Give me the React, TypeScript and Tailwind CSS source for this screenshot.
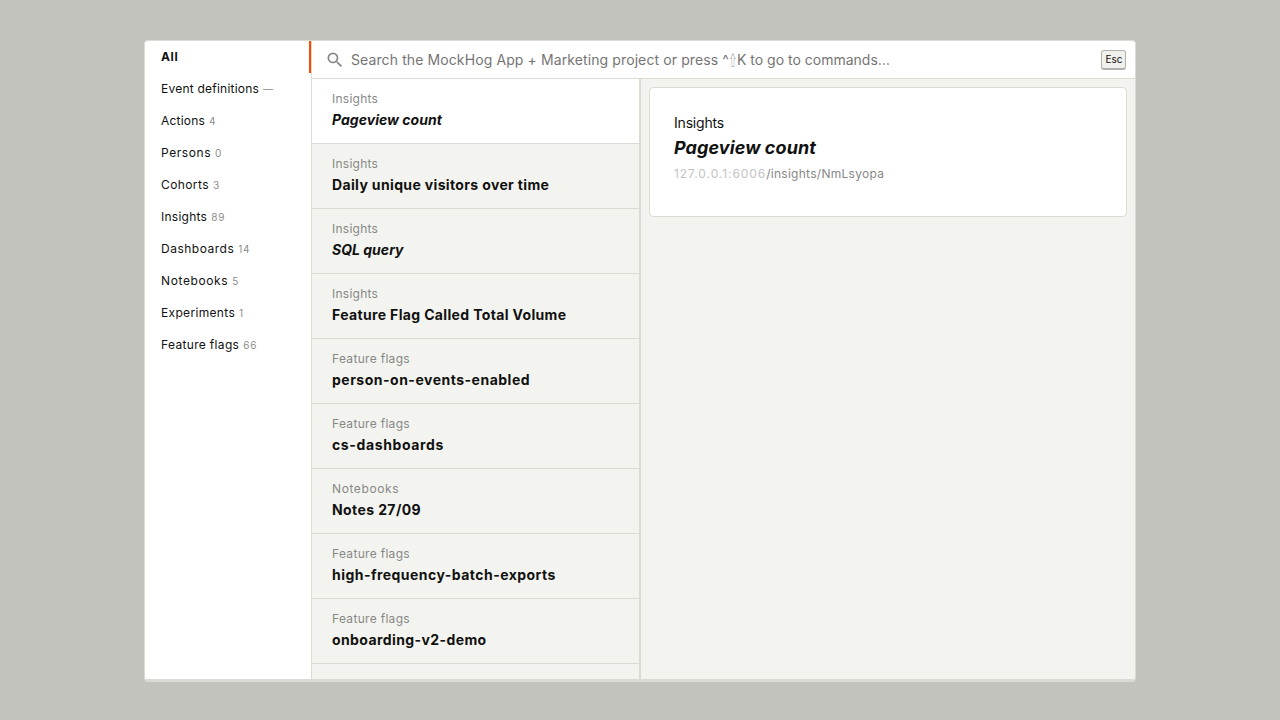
const tabs: { label: string; count: string; tracking: string }[] = [
  { label: 'All', count: '', tracking: 'tracking-[0.6px]' },
  { label: 'Event definitions', count: '—', tracking: 'tracking-[0.23px]' },
  { label: 'Actions', count: '4', tracking: 'tracking-[0.2px]' },
  { label: 'Persons', count: '0', tracking: 'tracking-[0.57px]' },
  { label: 'Cohorts', count: '3', tracking: 'tracking-[0.4px]' },
  { label: 'Insights', count: '89', tracking: 'tracking-[0.25px]' },
  { label: 'Dashboards', count: '14', tracking: 'tracking-[0.5px]' },
  { label: 'Notebooks', count: '5', tracking: 'tracking-[0.62px]' },
  { label: 'Experiments', count: '1', tracking: 'tracking-[0.33px]' },
  { label: 'Feature flags', count: '66', tracking: 'tracking-[0.33px]' },
]

const kindTracking: Record<string, string> = {
  Insights: 'tracking-[0.25px]',
  Notebooks: 'tracking-[0.6px]',
  'Feature flags': 'tracking-[0.31px]',
}

const results: { kind: string; name: string; tracking: string; italic?: boolean }[] = [
  { kind: 'Insights', name: 'Pageview count', tracking: 'tracking-[0.02px]', italic: true },
  { kind: 'Insights', name: 'Daily unique visitors over time', tracking: 'tracking-[0.355px]' },
  { kind: 'Insights', name: 'SQL query', tracking: 'tracking-[0.02px]', italic: true },
  { kind: 'Insights', name: 'Feature Flag Called Total Volume', tracking: 'tracking-[0.35px]' },
  { kind: 'Feature flags', name: 'person-on-events-enabled', tracking: 'tracking-[0.5px]' },
  { kind: 'Feature flags', name: 'cs-dashboards', tracking: 'tracking-[0.62px]' },
  { kind: 'Notebooks', name: 'Notes 27/09', tracking: 'tracking-[0.4px]' },
  { kind: 'Feature flags', name: 'high-frequency-batch-exports', tracking: 'tracking-[0.46px]' },
  { kind: 'Feature flags', name: 'onboarding-v2-demo', tracking: 'tracking-[0.4px]' },
]

function SearchIcon() {
  return (
    <svg className="size-5 shrink-0 text-[#888]" viewBox="0 0 24 24" fill="currentColor">
      <path d="M15.5 14h-.79l-.28-.27A6.471 6.471 0 0 0 16 9.5 6.5 6.5 0 1 0 9.5 16c1.61 0 3.09-.59 4.23-1.57l.27.28v.79l5 4.99L20.49 19l-4.99-5zm-6 0C7.01 14 5 11.99 5 9.5S7.01 5 9.5 5 14 7.01 14 9.5 11.99 14 9.5 14z" />
    </svg>
  )
}

export default function App() {
  return (
    <div className="flex h-[720px] w-full justify-center bg-[#c2c3bd] pt-10 font-['Inter',sans-serif] text-[#111]">
      <div className="flex h-[642px] w-[992px] overflow-hidden rounded border border-b-[3px] border-[#dadbd2] bg-[#f3f4ef]">
        <nav className="w-[167px] shrink-0 border-r border-[#dadbd2] bg-white">
          {tabs.map(({ label, count, tracking }, i) => (
            <div
              key={label}
              className={`flex h-8 items-center gap-1 pl-4 text-xs ${i === 0 ? 'border-r-2 border-[#f54e00] font-bold' : ''}`}
            >
              <span className={tracking}>{label}</span>
              <span className="pt-0.5 text-[10px] tracking-[0.8px] text-[#8c8c8c]">{count}</span>
            </div>
          ))}
        </nav>
        <div className="flex min-w-0 flex-1 flex-col">
          <header className="flex h-[38px] shrink-0 items-center border-b border-[#dadbd2] bg-white pr-[9px] pl-[13px]">
            <SearchIcon />
            <span className="ml-1.5 flex-1 text-sm whitespace-nowrap text-[#757575]">
              <span className="tracking-[0.105px]">Search the MockHog App + Marketing project or press ^</span>
              <span className="inline-block w-2 origin-left scale-x-55 font-['Noto_Sans_CJK_JP',sans-serif] leading-none">
                ⇧
              </span>
              K to go to commands…
            </span>
            <kbd className="flex h-5 w-[25px] items-center justify-center rounded-[3px] border border-b-2 border-[#b0b0ac] bg-[#f0f0ec] pl-px font-['Inter',sans-serif] text-[10px]">
              Esc
            </kbd>
          </header>
          <div className="flex min-h-0 flex-1">
            <ul className="w-[329px] shrink-0 overflow-hidden border-r-2 border-[#dadbd2]">
              {results.map((r, i) => (
                <li
                  key={r.name}
                  className={`h-[65px] border-b border-[#dadbd2] pt-3 pl-5 ${i === 0 ? 'bg-white' : ''}`}
                >
                  <div className={`text-xs leading-4 text-[#888] ${kindTracking[r.kind]}`}>{r.kind}</div>
                  <div className={`mt-[3px] text-sm leading-5 font-bold ${r.tracking} ${r.italic ? 'italic' : ''}`}>
                    {r.name}
                  </div>
                </li>
              ))}
            </ul>
            <main className="flex-1 p-2">
              <section className="h-[130px] rounded border border-[#dadbd2] bg-white px-6 pt-[25px]">
                <div className="text-sm leading-5 tracking-[-0.2px]">Insights</div>
                <h1 className="mt-px text-lg leading-7 font-bold tracking-[0.08px] italic">Pageview count</h1>
                <div className="mt-1 text-xs leading-4 tracking-[0.28px] text-[#888]">
                  <span className="tracking-[0.93px] text-[#c3c3c3]">127.0.0.1:6006</span>/insights/NmLsyopa
                </div>
              </section>
            </main>
          </div>
        </div>
      </div>
    </div>
  )
}
